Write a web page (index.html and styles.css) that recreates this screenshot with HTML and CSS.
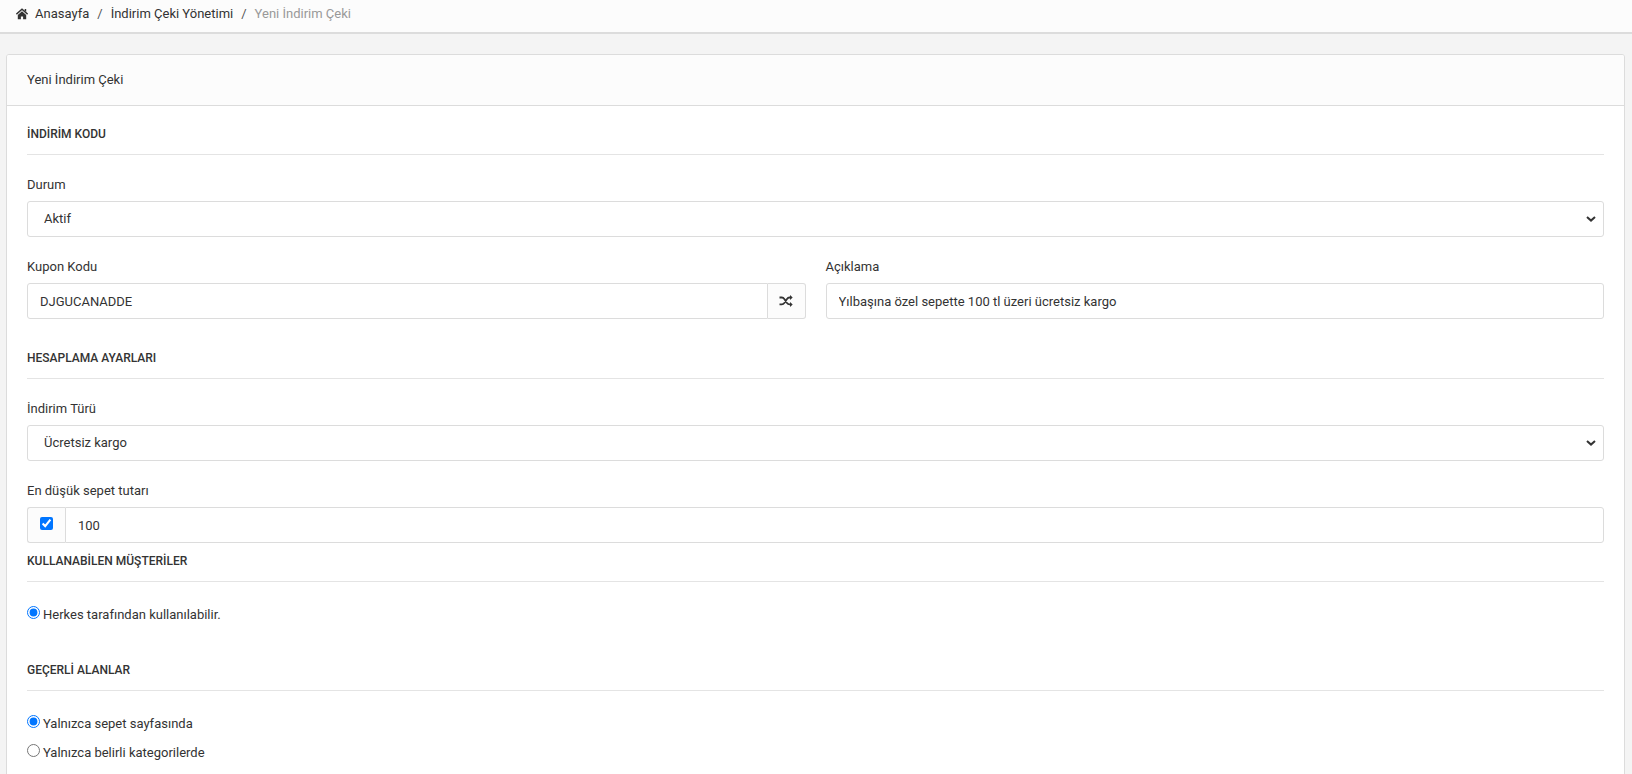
FILE: index.html
```html
<!DOCTYPE html>
<html lang="tr">
<head>
<meta charset="utf-8">
<title>Yeni İndirim Çeki</title>
<link rel="stylesheet" href="styles.css">
</head>
<body>
<nav class="breadcrumb" aria-label="Sayfa yolu">
  <ol class="crumbs">
    <li class="crumb">
      <a href="#"><svg class="home-icon" viewBox="0 0 12 12" aria-hidden="true"><path d="M.4 6.200 6 1.200l5.600 5" fill="none" stroke="currentColor" stroke-width="1.400"/><path d="M8.700 1h1.500v3L8.700 2.600z" fill="currentColor"/><path d="M6 3.200 1.800 7v4.300h3.100V8.400h2.200v2.900h3.100V7z" fill="currentColor"/></svg>Anasayfa</a>
    </li>
    <li class="crumb"><a href="#">İndirim Çeki Yönetimi</a></li>
    <li class="crumb current" aria-current="page">Yeni İndirim Çeki</li>
  </ol>
</nav>
<main class="panel">
  <h1 class="panel-title">Yeni İndirim Çeki</h1>
  <form class="panel-body">
    <section class="section">
      <h2 class="section-title">İNDİRİM KODU</h2>
      <div class="field">
        <label for="status">Durum</label>
        <div class="select">
          <select id="status" class="control"><option>Aktif</option></select>
          <svg class="chevron" viewBox="0 0 10 6" aria-hidden="true"><path d="M1 1l4 3.600L9 1" fill="none" stroke="currentColor" stroke-width="2"/></svg>
        </div>
      </div>
      <div class="columns">
        <div class="field">
          <label for="code">Kupon Kodu</label>
          <div class="input-group">
            <input id="code" class="control" type="text" value="DJGUCANADDE">
            <button class="addon" type="button" aria-label="Rastgele kod üret"><svg class="shuffle-icon" viewBox="0 0 14 12" aria-hidden="true"><path d="M.5 2.500h2.300c1.200 0 2 .7 2.700 1.700l2.300 3.500c.7 1 1.500 1.700 2.700 1.700h1M.5 9.400h2.300c1.200 0 2-.7 2.700-1.700l2.300-3.500c.7-1 1.500-1.700 2.700-1.700h1" fill="none" stroke="currentColor" stroke-width="1.800"/><path d="M11 0l2.700 2.500L11 5zM11 6.900l2.700 2.500L11 11.900z" fill="currentColor"/></svg></button>
          </div>
        </div>
        <div class="field">
          <label for="description">Açıklama</label>
          <input id="description" class="control" type="text" value="Yılbaşına özel sepette 100 tl üzeri ücretsiz kargo">
        </div>
      </div>
    </section>
    <section class="section">
      <h2 class="section-title">HESAPLAMA AYARLARI</h2>
      <div class="field">
        <label for="type">İndirim Türü</label>
        <div class="select">
          <select id="type" class="control"><option>Ücretsiz kargo</option></select>
          <svg class="chevron" viewBox="0 0 10 6" aria-hidden="true"><path d="M1 1l4 3.600L9 1" fill="none" stroke="currentColor" stroke-width="2"/></svg>
        </div>
      </div>
      <div class="field">
        <label for="minimum">En düşük sepet tutarı</label>
        <div class="input-group">
          <span class="addon"><input class="check" type="checkbox" checked aria-label="En düşük sepet tutarını uygula"></span>
          <input id="minimum" class="control" type="text" value="100">
        </div>
      </div>
    </section>
    <section class="section compact">
      <h2 class="section-title">KULLANABİLEN MÜŞTERİLER</h2>
      <div class="options">
        <label class="option"><input class="radio" type="radio" name="customers" checked>Herkes tarafından kullanılabilir.</label>
      </div>
    </section>
    <section class="section">
      <h2 class="section-title">GEÇERLİ ALANLAR</h2>
      <div class="options">
        <label class="option"><input class="radio" type="radio" name="scope" checked>Yalnızca sepet sayfasında</label>
        <label class="option"><input class="radio" type="radio" name="scope">Yalnızca belirli kategorilerde</label>
      </div>
    </section>
  </form>
</main>
</body>
</html>
```
FILE: styles.css
```css
* {
  box-sizing: border-box;
}

body {
  margin: 0;
  background: #f4f4f4;
  color: #333;
  font: 13px/20px Roboto, "Liberation Sans", sans-serif;
}

a {
  color: inherit;
  text-decoration: none;
}

.breadcrumb {
  padding: 4px 16px 8px;
  border-bottom: 2px solid #dcdcdc;
  background: #fcfcfc;
}

.crumbs {
  display: flex;
  margin: 0;
  padding: 0;
  list-style: none;
}

.crumb + .crumb::before {
  content: "/";
  padding: 0 8px;
  color: #555;
}

.current {
  color: #999;
}

.home-icon {
  width: 12px;
  height: 12px;
  margin-right: 7px;
  vertical-align: -2px;
}

.panel {
  margin: 20px 7px 0 6px;
  border: 1px solid #dcdcdc;
  border-radius: 3px 3px 0 0;
  background: #fff;
}

.panel-title {
  margin: 0;
  padding: 15px 20px;
  border-bottom: 1px solid #dcdcdc;
  border-radius: 2px 2px 0 0;
  background: #fcfcfc;
  font-size: 13px;
  font-weight: 400;
}

.panel-body {
  padding: 18px 20px;
}

.section + .section {
  margin-top: 29px;
}

.section + .compact {
  margin-top: 8px;
}

.section-title {
  margin: 0 0 20px;
  padding-bottom: 10px;
  border-bottom: 1px solid #e4e4e4;
  font-size: 12px;
  line-height: 20px;
  font-weight: 500;
}

.field {
  display: flex;
  flex-direction: column;
  gap: 6px;
}

.field + .field,
.field + .columns {
  margin-top: 20px;
}

.columns {
  display: grid;
  grid-template-columns: 1fr 1fr;
  gap: 20px;
}

.columns .field + .field {
  margin-top: 0;
}

.control {
  width: 100%;
  min-width: 0;
  height: 36px;
  margin: 0;
  padding: 0 12px;
  border: 1px solid #dcdcdc;
  border-radius: 3px;
  background: #fff;
  color: #333;
  font: inherit;
}

.select {
  display: flex;
  position: relative;
}

.select .control {
  appearance: none;
  padding: 0 32px 0 16px;
}

.chevron {
  position: absolute;
  top: 15px;
  right: 8px;
  width: 10px;
  height: 6px;
  pointer-events: none;
}

.input-group {
  display: flex;
}

.input-group .control {
  flex: 1;
}

.addon {
  display: flex;
  align-items: center;
  justify-content: center;
  width: 38px;
  padding: 0;
  border: 1px solid #dcdcdc;
  background: #fcfcfc;
  color: #333;
}

.addon:first-child {
  border-right: 0;
  border-radius: 3px 0 0 3px;
}

.addon:last-child {
  border-left: 0;
  border-radius: 0 3px 3px 0;
}

.addon + .control {
  border-radius: 0 3px 3px 0;
}

.control:not(:last-child) {
  border-radius: 3px 0 0 3px;
}

.select .control {
  border-radius: 3px;
}

.shuffle-icon {
  width: 14px;
  height: 12px;
}

.check,
.radio {
  width: 13px;
  height: 13px;
  margin: 0;
}

.check {
  margin-bottom: 3px;
}

.options {
  display: flex;
  flex-direction: column;
  align-items: flex-start;
  gap: 9px;
  padding: 3px 0 6px;
}

.option {
  display: flex;
  gap: 3px;
}

.radio {
  margin-top: 1px;
}
```
